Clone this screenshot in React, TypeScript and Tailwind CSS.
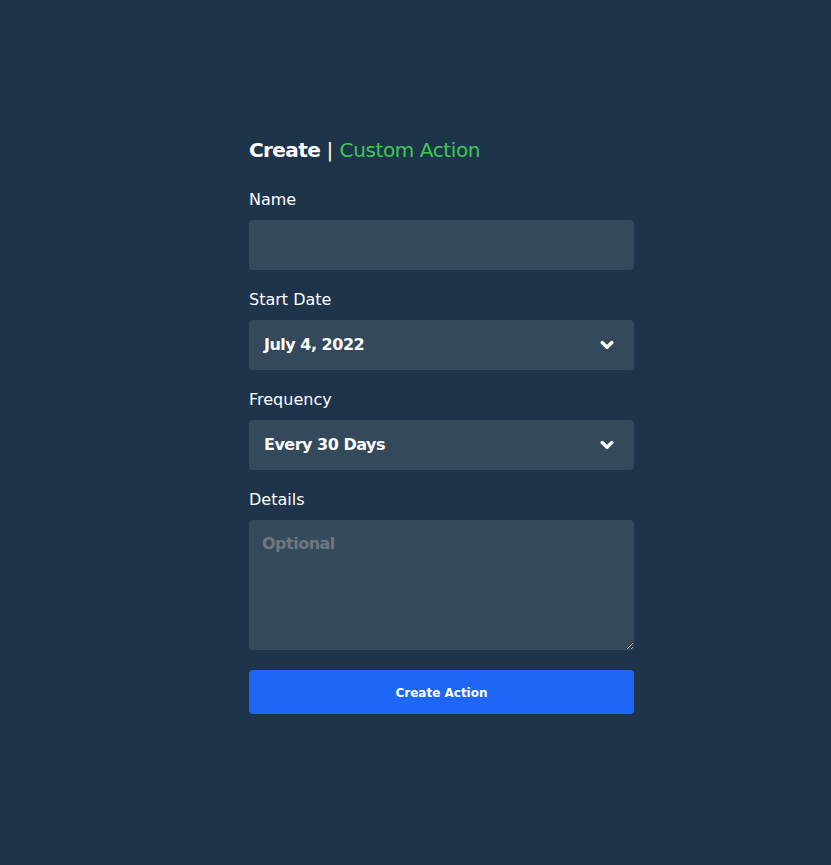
function Chevron() {
  return (
    <svg width="14" height="10" viewBox="0 0 14 10" fill="none" className="text-white">
      <path
        d="M2.2 2.6 L7 7.2 L11.8 2.6"
        stroke="currentColor"
        strokeWidth="3.4"
        strokeLinecap="round"
        strokeLinejoin="round"
      />
    </svg>
  );
}

function Field({ label, children }: { label: string; children: React.ReactNode }) {
  return (
    <div className="flex flex-col gap-2">
      <label className="text-[16px] leading-6 text-white">{label}</label>
      {children}
    </div>
  );
}

function SelectBox({ value }: { value: string }) {
  return (
    <div className="flex h-[50px] items-center justify-between rounded-[4px] bg-[#34495c] pl-[15px] pr-[20px]">
      <span className="text-[16px] font-bold tracking-[-0.5px] text-white">{value}</span>
      <Chevron />
    </div>
  );
}

export default function App() {
  return (
    <div
      className="min-h-[865px] w-full bg-[#1e344b] pl-[249px] pt-[136px]"
      style={{ fontFamily: '"DejaVu Sans", sans-serif' }}
    >
      <form className="flex w-[385px] flex-col" onSubmit={(e) => e.preventDefault()}>
        <h1 className="text-[20px] leading-7 text-white">
          <span className="font-bold tracking-[-0.6px]">Create</span> |{" "}
          <span className="tracking-[-0.4px] text-[#3cc954]">Custom Action</span>
        </h1>

        <div className="mt-[24px] flex flex-col gap-[18px]">
          <Field label="Name">
            <input
              type="text"
              className="h-[50px] rounded-[4px] bg-[#34495c] px-[15px] text-white outline-none"
            />
          </Field>
          <Field label="Start Date">
            <SelectBox value="July 4, 2022" />
          </Field>
          <Field label="Frequency">
            <SelectBox value="Every 30 Days" />
          </Field>
          <Field label="Details">
            <textarea
              placeholder="Optional"
              className="h-[130px] rounded-[4px] bg-[#34495c] px-[13px] py-[12px] text-[16px] font-bold tracking-[-0.5px] text-white outline-none placeholder:text-[#6f7780]"
            />
          </Field>
        </div>

        <button
          type="submit"
          className="mt-[20px] h-[44px] rounded-[4px] bg-[#1e66f5] pt-[2px] text-[12px] font-bold text-white"
        >
          Create Action
        </button>
      </form>
    </div>
  );
}
